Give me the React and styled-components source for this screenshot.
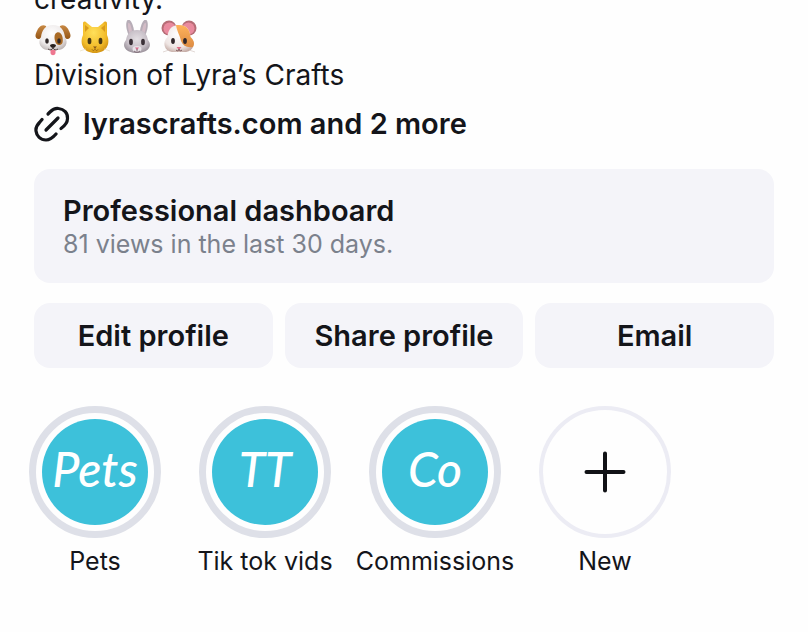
import React from "react";
import styled, { createGlobalStyle } from "styled-components";

const actions = ["Edit profile", "Share profile", "Email"];

const highlights = [
  { title: "Pets", cover: "Pets" },
  { title: "Tik tok vids", cover: "TT" },
  { title: "Commissions", cover: "Co" },
];

const DogIcon = () => (
  <Emoji viewBox="0 0 36 36" role="img" aria-label="dog">
    <defs>
      <radialGradient id="dogFace" cx="45%" cy="35%" r="70%">
        <stop offset="0" stopColor="#ffffff" />
        <stop offset="0.65" stopColor="#eeeaea" />
        <stop offset="1" stopColor="#bdb5b4" />
      </radialGradient>
      <linearGradient id="dogEar" x1="0" y1="0" x2="0" y2="1">
        <stop offset="0" stopColor="#c98a45" />
        <stop offset="1" stopColor="#945515" />
      </linearGradient>
    </defs>
    <path d="M11 6C6 3 2 9 .5 15C0 19 4 20 6 18L12 10Z" fill="url(#dogEar)" />
    <path d="M25 6C30 3 34 9 35.500 15C36 19 32 20 30 18L24 10Z" fill="url(#dogEar)" />
    <path d="M18 5C26 5 29 10 30 17C34 23 30 29 24 30L12 30C6 29 2 23 6 17C7 10 10 5 18 5Z" fill="url(#dogFace)" />
    <path d="M19.500 18C19 11 26 10 27.500 17C28.500 23 27 25 24 25C21 25 20 22 19.500 18Z" fill="#a96a25" />
    <ellipse cx="12" cy="21" rx="1.800" ry="2.800" fill="#302827" />
    <ellipse cx="24" cy="21" rx="1.800" ry="2.800" fill="#302827" />
    <path d="M15.500 30H20.500V33C20 36 16 36 15.500 33Z" fill="#ee7790" />
    <path d="M15 25C17 23.500 19 23.500 21 25C21 27 19 28 18 28C17 28 15 27 15 25Z" fill="#28211f" />
    <path d="M13 29C15 30.500 17 30 18 28C19 30 21 30.500 23 29" fill="none" stroke="#473737" strokeWidth="0.900" />
  </Emoji>
);

const CatIcon = () => (
  <Emoji viewBox="0 0 36 36" role="img" aria-label="cat">
    <defs>
      <radialGradient id="catFace" cx="45%" cy="35%" r="70%">
        <stop offset="0" stopColor="#ffe05a" />
        <stop offset="0.65" stopColor="#f3bd2b" />
        <stop offset="1" stopColor="#cf8f10" />
      </radialGradient>
    </defs>
    <path d="M6 4C6 1 8 1 10 3L15 7H21L26 3C28 1 30 1 30 4V15C34 24 29 33 18 33C7 33 2 24 6 15Z" fill="url(#catFace)" />
    <path d="M8 5L12 8L8 12ZM28 5L24 8L28 12Z" fill="#d99a1c" />
    <ellipse cx="12.500" cy="21" rx="1.900" ry="3.300" fill="#473713" />
    <ellipse cx="23.500" cy="21" rx="1.900" ry="3.300" fill="#473713" />
    <path d="M16 26.500H20L18 28.500Z" fill="#825318" />
    <path d="M15 29.500C16 31 17.500 31 18 28.500C18.500 31 20 31 21 29.500" fill="none" stroke="#936318" strokeWidth="0.900" />
    <path d="M9 29L3 31M27 29L33 31" stroke="#eadfc2" strokeWidth="0.700" />
  </Emoji>
);

const RabbitIcon = () => (
  <Emoji viewBox="0 0 36 36" role="img" aria-label="rabbit">
    <defs>
      <radialGradient id="rabbitFace" cx="50%" cy="40%" r="65%">
        <stop offset="0" stopColor="#e4dfe3" />
        <stop offset="0.600" stopColor="#c8c0c8" />
        <stop offset="1" stopColor="#948b94" />
      </radialGradient>
    </defs>
    <ellipse cx="11" cy="8.500" rx="3.500" ry="9" fill="#b7adb7" transform="rotate(-12 11 8)" />
    <ellipse cx="25" cy="8.500" rx="3.500" ry="9" fill="#b7adb7" transform="rotate(12 25 8)" />
    <ellipse cx="11" cy="9" rx="1.600" ry="6.500" fill="#d3bcc6" transform="rotate(-12 11 9)" />
    <ellipse cx="25" cy="9" rx="1.600" ry="6.500" fill="#d3bcc6" transform="rotate(12 25 9)" />
    <path d="M18 10C26 10 28 15 29 20C34 26 29 33 18 33C7 33 2 26 7 20C8 15 10 10 18 10Z" fill="url(#rabbitFace)" />
    <ellipse cx="12" cy="22" rx="1.900" ry="3.200" fill="#3b3138" />
    <ellipse cx="24" cy="22" rx="1.900" ry="3.200" fill="#3b3138" />
    <ellipse cx="18" cy="29" rx="4.500" ry="3" fill="#e9e4e9" />
    <path d="M16 27.500H20L18 30Z" fill="#da6c8b" />
    <path d="M18 29V31M15 31C16.500 32.500 19.500 32.500 21 31" fill="none" stroke="#68505c" strokeWidth="0.800" />
  </Emoji>
);

const HamsterIcon = () => (
  <Emoji viewBox="0 0 36 36" role="img" aria-label="hamster">
    <defs>
      <radialGradient id="hamsterFace" cx="45%" cy="35%" r="70%">
        <stop offset="0" stopColor="#ffffff" />
        <stop offset="0.700" stopColor="#eee5e3" />
        <stop offset="1" stopColor="#c4aaa3" />
      </radialGradient>
      <linearGradient id="hamsterPatch" x1="0" y1="0" x2="0" y2="1">
        <stop offset="0" stopColor="#ffb35b" />
        <stop offset="1" stopColor="#dd8c43" />
      </linearGradient>
    </defs>
    <circle cx="8" cy="8" r="7.500" fill="#b66c76" />
    <circle cx="28" cy="8" r="7.500" fill="#b66c76" />
    <circle cx="8.500" cy="8.500" r="6" fill="#e98a9e" />
    <circle cx="27.500" cy="8.500" r="6" fill="#e98a9e" />
    <path d="M18 5C26 5 29 10 29.500 17C35 22 33 31 25 32H11C3 31 1 22 6.500 17C7 10 10 5 18 5Z" fill="url(#hamsterFace)" />
    <path d="M15 5C26 4 29 10 29.500 17C33 20 34 24 32 27C26 28 22 26 20 21C19 15 16 12 15 5Z" fill="url(#hamsterPatch)" />
    <ellipse cx="12" cy="21" rx="1.900" ry="3" fill="#302629" />
    <ellipse cx="24" cy="21" rx="1.900" ry="3" fill="#302629" />
    <path d="M15.500 27H20.500L18 30Z" fill="#dd6b82" />
    <path d="M15 30C16.500 31.500 18 31 18 29C18 31 19.500 31.500 21 30" fill="none" stroke="#765052" strokeWidth="0.900" />
    <path d="M8 30L2 32M28 30L34 32" stroke="#d6c8c4" strokeWidth="0.700" />
  </Emoji>
);

const LinkIcon = () => (
  <svg width="36" height="36" viewBox="0 0 36 36" fill="none" stroke="currentColor" strokeWidth="3.200" strokeLinecap="round" aria-hidden="true">
    <path d="M14 8L16 6C19 3 21.500 2 24.500 2.500C30 3 34 7 33.500 12.500C33.500 17 30.500 20 27 22.500" />
    <path d="M8 13.500L5.500 16.500C2.500 19.500 1.600 22 2 25C2.500 30 6.500 34 12 34C16 34 19 31.500 22 28" />
    <path d="M12 24L24 12" />
  </svg>
);

const App = () => {
  return (
    <>
      <GlobalStyle />
      <Profile>
        <Bio>
          <p>creativity.</p>
          <EmojiRow>
            <DogIcon />
            <CatIcon />
            <RabbitIcon />
            <HamsterIcon />
          </EmojiRow>
          <p>Division of Lyra’s Crafts</p>
        </Bio>
        <BioLink href="#links">
          <LinkIcon />
          lyrascrafts.com and 2 more
        </BioLink>
        <Dashboard>
          <h2>Professional dashboard</h2>
          <p>81 views in the last 30 days.</p>
        </Dashboard>
        <Actions>
          {actions.map((label) => (
            <ActionButton type="button" key={label}>
              {label}
            </ActionButton>
          ))}
        </Actions>
        <Highlights>
          {highlights.map((item) => (
            <Highlight type="button" key={item.title}>
              <Ring>
                <Cover aria-hidden="true">{item.cover}</Cover>
              </Ring>
              <span>{item.title}</span>
            </Highlight>
          ))}
          <Highlight type="button">
            <Ring $empty>
              <svg width="42" height="42" viewBox="0 0 42 42" stroke="#111216" strokeWidth="4" strokeLinecap="round" aria-hidden="true">
                <path d="M21 2.500V39.500M2.500 21H39.500" />
              </svg>
            </Ring>
            <span>New</span>
          </Highlight>
        </Highlights>
      </Profile>
    </>
  );
};

const GlobalStyle = createGlobalStyle`
  * {
    box-sizing: border-box;
  }
  body {
    margin: 0;
    overflow-x: hidden;
    background-color: #fefefe;
    color: #14151a;
    font-family: Inter, "Liberation Sans", sans-serif;
  }
  h2,
  p {
    margin: 0;
  }
  button {
    border: none;
    color: inherit;
    font-family: inherit;
    cursor: pointer;
  }
`;

const Profile = styled.main`
  padding: 0 34px 40px;
`;

const Bio = styled.section`
  margin-top: -20px;
  font-size: 28px;
  line-height: 38px;
`;

const EmojiRow = styled.div`
  display: flex;
  align-items: flex-end;
  gap: 6px;
  height: 38px;
  padding-left: 1px;
`;

const Emoji = styled.svg`
  width: 36px;
  height: 36px;
`;

const BioLink = styled.a`
  display: flex;
  align-items: center;
  gap: 13px;
  width: fit-content;
  margin-top: 12px;
  color: inherit;
  font-size: 29px;
  font-weight: 600;
  line-height: 36px;
  text-decoration: none;
`;

const Dashboard = styled.section`
  margin-top: 27px;
  padding: 24px 29px;
  border-radius: 16px;
  background-color: #f4f4f9;
  h2 {
    font-size: 29px;
    font-weight: 600;
    line-height: 36px;
  }
  p {
    color: #7b818c;
    font-size: 25px;
    line-height: 30px;
  }
`;

const Actions = styled.div`
  display: grid;
  grid-template-columns: repeat(3, 1fr);
  gap: 12px;
  margin-top: 20px;
`;

const ActionButton = styled.button`
  padding: 14px 8px;
  border-radius: 16px;
  background-color: #f4f4f9;
  font-size: 29px;
  font-weight: 600;
  line-height: 37px;
`;

const Highlights = styled.div`
  display: flex;
  margin: 38px -24px 0;
`;

const Highlight = styled.button`
  display: flex;
  flex-direction: column;
  align-items: center;
  gap: 8px;
  width: 170px;
  padding: 0;
  background: none;
  font-size: 25px;
  line-height: 30px;
  white-space: nowrap;
`;

const Ring = styled.div`
  display: flex;
  align-items: center;
  justify-content: center;
  width: 132px;
  height: 132px;
  border: ${(props) => (props.$empty ? "4px solid #ececf4" : "7px solid #dee0e8")};
  border-radius: 50%;
`;

const Cover = styled.div`
  width: 106px;
  height: 106px;
  border-radius: 50%;
  background-color: #3dc1da;
  color: #fff;
  font-family: Lato, sans-serif;
  font-size: 48px;
  font-style: italic;
  font-weight: 500;
  line-height: 100px;
  text-align: center;
`;

export default App;
